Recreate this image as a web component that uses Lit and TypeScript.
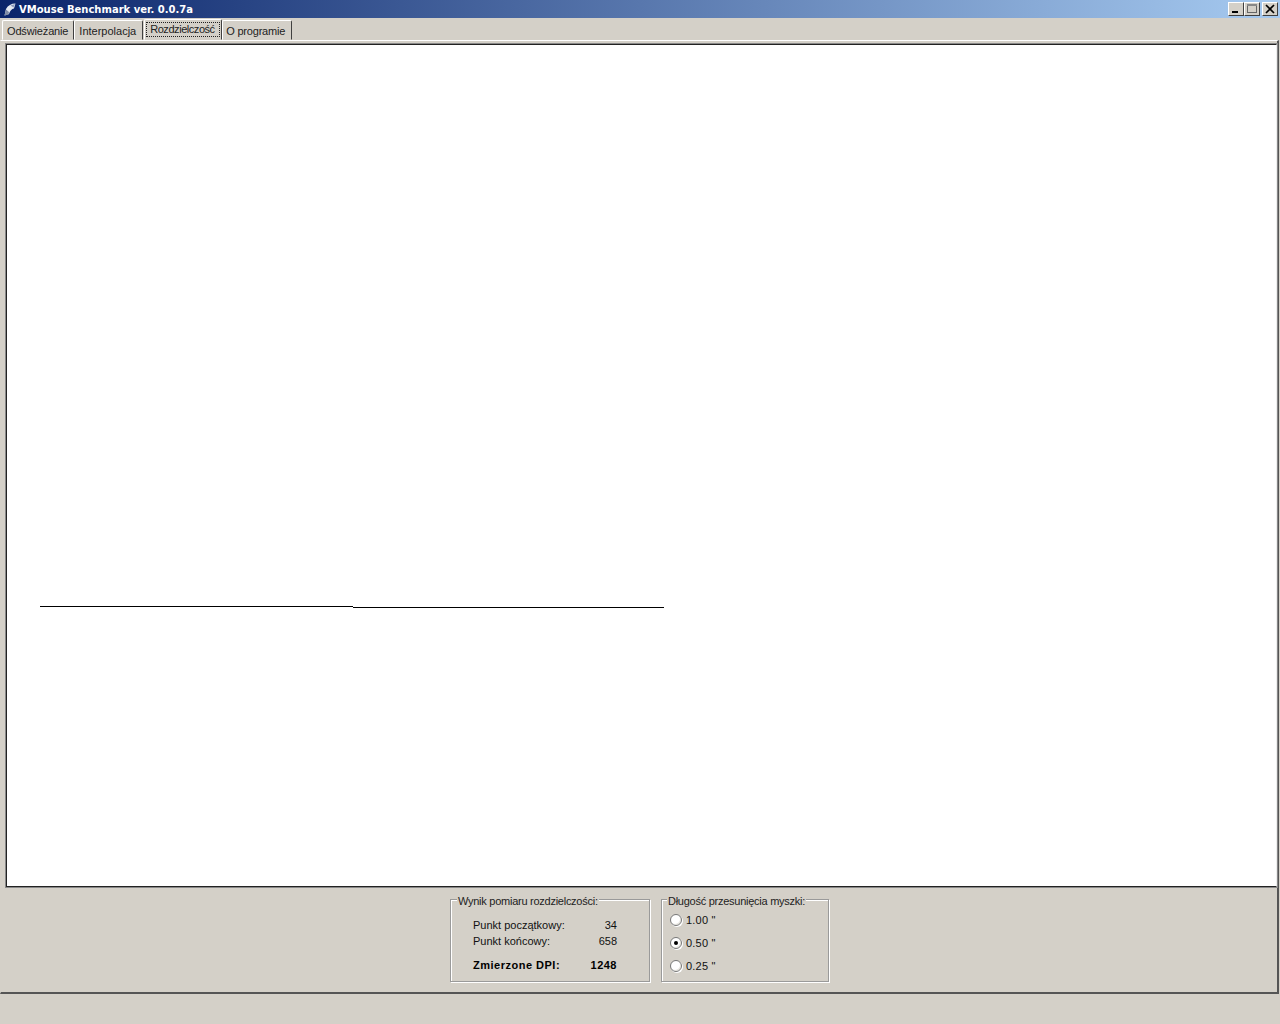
import { LitElement, html, css } from "lit";
import { customElement } from "lit/decorators.js";

@customElement("app-root")
export class AppRoot extends LitElement {
  static styles = css`
    :host { display: block; width: 1280px; height: 1024px; background: #d4d0c8; font: 11px "Liberation Sans", Arial, sans-serif; color: #111; overflow: hidden; }
    .win { display: flex; flex-direction: column; height: 1024px; }
    .title { height: 18px; flex: none; display: flex; align-items: center; background: linear-gradient(90deg, #0a246a, #a6caf0); padding: 0 2px 0 4px; color: #fff; font: bold 10px "DejaVu Sans", sans-serif; }
    .logo { width: 12px; height: 13px; margin-right: 3px; flex: none; }
    .title span { flex: 1; white-space: nowrap; }
    .cap { width: 16px; height: 14px; box-sizing: border-box; background: #d4d0c8; border: 1px solid; border-color: #fff #404040 #404040 #fff; display: block; flex: none; }
    .cap svg { display: block; width: 14px; height: 12px; }
    .cap.gap { margin-left: 2px; }
    .tabs { height: 22px; flex: none; display: flex; align-items: flex-end; padding-left: 2px; box-sizing: border-box; }
    .tab { height: 20px; box-sizing: border-box; padding: 3px 5px 0 4px; line-height: 15px; border: 1px solid; border-color: #fff #404040 transparent #fff; border-radius: 2px 2px 0 0; white-space: nowrap; color: #222; letter-spacing: -.15px; }
    .tab.i { letter-spacing: 0; padding-right: 6px; }
    .tab.p { letter-spacing: -.2px; padding: 3px 6px 0 3px; }
    .tab.a { width: 78px; height: 21px; align-self: flex-end; padding: 0; display: flex; margin-left: 1px; letter-spacing: -.45px; }
    .tab.a b { font-weight: 400; flex: 1; margin: 3px 2px 2px; outline: 1px dotted #222; line-height: 13px; padding-left: 3px; height: 13px; }
    .panel { flex: 1; display: flex; flex-direction: column; border-top: 1px solid #fff; border-right: 2px solid #555; border-bottom: 2px solid #555; border-left: 1px solid #d4d0c8; min-height: 0; margin-right: 1px; }
    .canvas { position: relative; height: 843px; flex: none; margin: 3px 0 0 5px; background: #fff; box-sizing: border-box; border: 1px solid; border-color: #222 #eee #222 #222; outline: 1px solid #888; outline-offset: 0; }
    .canvas svg { position: absolute; left: 0; top: 0; width: 1271px; height: 841px; }
    .bottom { flex: 1; display: flex; justify-content: flex-start; padding: 12px 0 0 449px; gap: 11px; }
    fieldset { margin: 0; padding: 0; box-sizing: border-box; height: 83px; border: 1px solid; border-color: #9a9a9a; box-shadow: 1px 1px 0 #fff, inset 1px 1px 0 #fff; position: relative; }
    legend { position: absolute; left: 6px; top: -5px; background: #d4d0c8; padding: 0 1px; line-height: 13px; white-space: nowrap; color: #222; letter-spacing: -.26px; }
    .o legend { left: 5px; }
    .r { width: 200px; }
    .r .rows { padding: 18px 32px 0 22px; display: grid; grid-template-columns: 1fr auto; row-gap: 1px; line-height: 15px; }
    .r .rows div:nth-child(2n) { text-align: right; }
    .r .strong { font-weight: 700; font-size: 11px; margin-top: 8px; color: #000; letter-spacing: .5px; }
    .o { width: 168px; }
    .opts { padding: 12px 0 0 8px; display: flex; flex-direction: column; gap: 8px; }
    .opt { display: flex; align-items: center; gap: 4px; height: 15px; letter-spacing: .2px; }
    .radio { width: 12px; height: 12px; border-radius: 50%; box-sizing: border-box; background: #fff; border: 1px solid #777; box-shadow: inset -1px -1px 0 #e8e6e0, 1px 1px 0 #fff; display: flex; align-items: center; justify-content: center; }
    .radio.on::after { content: ""; width: 4px; height: 4px; border-radius: 50%; background: #000; }
    .status { height: 30px; flex: none; }
  `;

  render() {
    return html`<div class="win">
      <div class="title">
        <svg class="logo" viewBox="0 0 12 13"><path d="M0.5 12.5 L2 6 Q5 0.5 11.5 0.5 L10 5.5 Q6.5 6 5 11 Z" fill="#e4e8f0"/><path d="M0.5 12.5 L2 6.5 L5 9 L4.5 11.5 Z" fill="#7f8ba4"/><path d="M6.5 2.5 L11 1 L9.5 4.5 Z" fill="#8c99b8"/></svg>
        <span>VMouse Benchmark ver. 0.0.7a</span>
        <i class="cap"><svg viewBox="0 0 14 12"><rect x="3" y="8" width="6" height="2" fill="#000"/></svg></i>
        <i class="cap"><svg viewBox="0 0 14 12"><rect x="2.5" y="1.5" width="9" height="8" fill="none" stroke="#666"/><rect x="2" y="1" width="10" height="2" fill="#888"/></svg></i>
        <i class="cap gap"><svg viewBox="0 0 14 12"><path d="M3 2 L11 10 M11 2 L3 10" stroke="#000" stroke-width="1.7" fill="none"/></svg></i>
      </div>
      <div class="tabs">
        <div class="tab">Odświeżanie</div>
        <div class="tab i">Interpolacja</div>
        <div class="tab a"><b>Rozdzielczość</b></div>
        <div class="tab p">O programie</div>
      </div>
      <div class="panel">
        <div class="canvas">
          <svg viewBox="0 0 1271 841">
            <rect x="33" y="561" width="313" height="1" fill="#000"/>
            <rect x="346" y="562" width="311" height="1" fill="#000"/>
          </svg>
        </div>
        <div class="bottom">
          <fieldset class="r">
            <legend>Wynik pomiaru rozdzielczości:</legend>
            <div class="rows">
              <div>Punkt początkowy:</div><div>34</div>
              <div>Punkt końcowy:</div><div>658</div>
              <div class="strong">Zmierzone DPI:</div><div class="strong">1248</div>
            </div>
          </fieldset>
          <fieldset class="o">
            <legend>Długość przesunięcia myszki:</legend>
            <div class="opts">
              <div class="opt"><i class="radio"></i>1.00 "</div>
              <div class="opt"><i class="radio on"></i>0.50 "</div>
              <div class="opt"><i class="radio"></i>0.25 "</div>
            </div>
          </fieldset>
        </div>
      </div>
      <div class="status"></div>
    </div>`;
  }
}
